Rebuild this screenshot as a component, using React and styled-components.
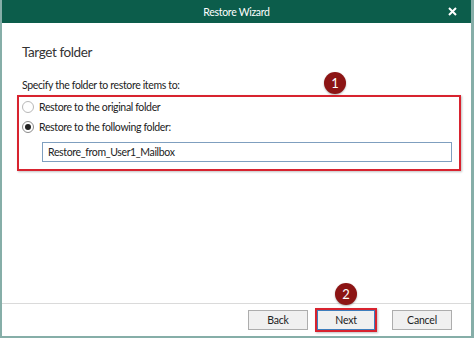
import React from "react";
import styled, { createGlobalStyle } from "styled-components";

const GlobalStyle = createGlobalStyle`
  html, body {
    margin: 0;
    padding: 0;
  }
  body {
    font-family: Lato, "Noto Sans", sans-serif;
    color: #222222;
  }
`;

const Frame = styled.div`
  width: 474px;
  height: 338px;
  box-sizing: border-box;
  padding: 0 3px 2px 2px;
  background: #86aea8;
`;

const Window = styled.div`
  display: flex;
  flex-direction: column;
  height: 100%;
  background: #ffffff;
`;

const TitleBar = styled.div`
  position: relative;
  display: flex;
  align-items: center;
  justify-content: center;
  height: 23px;
  flex-shrink: 0;
  background: #0c5d4b;
  color: #ffffff;
  font-size: 10.5px;
  letter-spacing: -0.3px;
`;

const CloseButton = styled.div`
  position: absolute;
  right: 14px;
  top: 7px;
  width: 9px;
  height: 9px;
  display: flex;
`;

const Content = styled.div`
  flex: 1;
  display: flex;
  flex-direction: column;
  padding: 19px 10px 0 15px;
  font-size: 10.5px;
  letter-spacing: -0.35px;
`;

const Heading = styled.div`
  margin-left: 5px;
  font-size: 13.5px;
  letter-spacing: -0.4px;
  line-height: 20px;
  color: #333333;
`;

const Label = styled.div`
  margin: 15px 0 0 5px;
  line-height: 16px;
`;

const Highlight = styled.div`
  position: relative;
  margin-top: 2px;
  border: 2px solid #d8232f;
  box-shadow: 1px 1px 2px rgba(0, 0, 0, 0.25);
  padding: 0 7px 7px 3px;
`;

const Badge = styled.div`
  position: absolute;
  left: ${(p) => p.$left}px;
  top: ${(p) => p.$top}px;
  width: 22px;
  height: 22px;
  border-radius: 50%;
  background: #8c1414;
  color: #ffffff;
  font-size: 13px;
  letter-spacing: 0;
  display: flex;
  align-items: center;
  justify-content: center;
  box-shadow: 0 1px 2px rgba(0, 0, 0, 0.3);
`;

const RadioRow = styled.label`
  display: flex;
  align-items: center;
  height: 20px;
  gap: 5px;
`;

const Radio = styled.span`
  width: 12px;
  height: 12px;
  box-sizing: border-box;
  border-radius: 50%;
  border: 1px solid ${(p) => (p.$checked ? "#8a8a8a" : "#b8b8b8")};
  display: flex;
  align-items: center;
  justify-content: center;
  &::after {
    content: "";
    width: 6px;
    height: 6px;
    border-radius: 50%;
    background: ${(p) => (p.$checked ? "#222222" : "transparent")};
  }
`;

const TextInput = styled.div`
  margin: 5px 0 0 20px;
  height: 20px;
  box-sizing: border-box;
  border: 1px solid #7f9fbf;
  padding-left: 5px;
  display: flex;
  align-items: center;
`;

const Footer = styled.div`
  display: flex;
  justify-content: flex-end;
  align-items: center;
  height: 33px;
  flex-shrink: 0;
  box-sizing: border-box;
  border-top: 1px solid #dadada;
  padding-right: 19px;
  font-size: 10.5px;
  letter-spacing: -0.2px;
`;

const Button = styled.div`
  width: ${(p) => p.$width || 60}px;
  height: 20px;
  box-sizing: border-box;
  margin-left: ${(p) => p.$gap || 0}px;
  display: flex;
  align-items: center;
  justify-content: center;
  background: #f0f0f0;
  border: 1px solid ${(p) => (p.$primary ? "#3d7ebd" : "#adadad")};
`;

const FocusFrame = styled.div`
  position: relative;
  margin-left: 7px;
  border: 2px solid #d8232f;
  box-shadow: 1px 1px 2px rgba(0, 0, 0, 0.25);
`;

export default function App() {
  return (
    <>
      <GlobalStyle />
      <Frame>
        <Window>
          <TitleBar>
            Restore Wizard
            <CloseButton>
              <svg width="9" height="9" viewBox="0 0 9 9">
                <path d="M1 1L8 8M8 1L1 8" stroke="#ffffff" strokeWidth="2" />
              </svg>
            </CloseButton>
          </TitleBar>
          <Content>
            <Heading>Target folder</Heading>
            <Label>Specify the folder to restore items to:</Label>
            <Highlight>
              <Badge $left={305} $top={-25}>1</Badge>
              <RadioRow>
                <Radio />
                Restore to the original folder
              </RadioRow>
              <RadioRow>
                <Radio $checked />
                Restore to the following folder:
              </RadioRow>
              <TextInput>Restore_from_User1_Mailbox</TextInput>
            </Highlight>
          </Content>
          <Footer>
            <Button>Back</Button>
            <FocusFrame>
              <Badge $left={18} $top={-27}>2</Badge>
              <Button $width={58} $primary>Next</Button>
            </FocusFrame>
            <Button $gap={15}>Cancel</Button>
          </Footer>
        </Window>
      </Frame>
    </>
  );
}
